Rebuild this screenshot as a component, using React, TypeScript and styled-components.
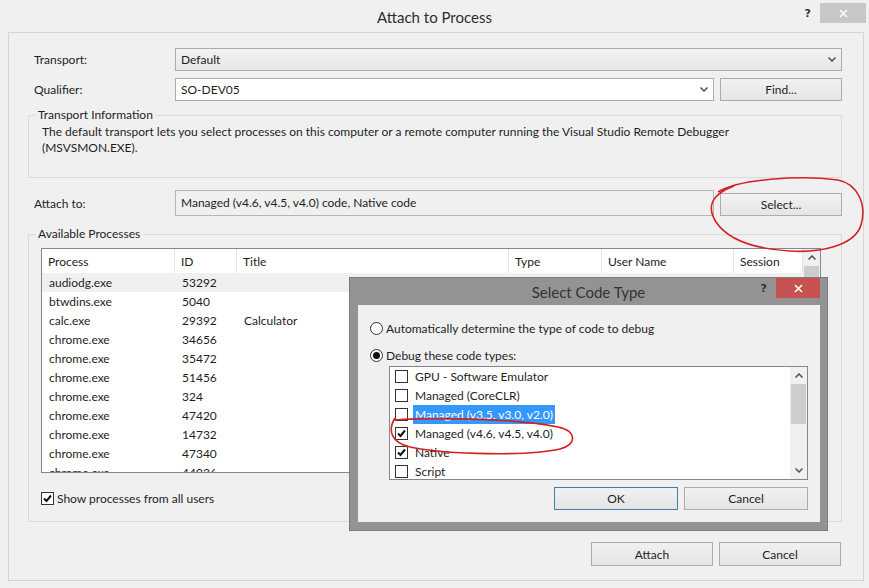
import styled, { createGlobalStyle } from "styled-components";

const GlobalStyle = createGlobalStyle`
  html, body {
    margin: 0;
    padding: 0;
  }
  body {
    width: 869px;
    height: 588px;
    overflow: hidden;
    background: #f0f0f0;
    font-family: Lato, "Liberation Sans", sans-serif;
    font-size: 12px;
    color: #1e1e1e;
  }
`;

type Proc = { name: string; id: string; title?: string };

const processes: Proc[] = [
  { name: "audiodg.exe", id: "53292" },
  { name: "btwdins.exe", id: "5040" },
  { name: "calc.exe", id: "29392", title: "Calculator" },
  { name: "chrome.exe", id: "34656" },
  { name: "chrome.exe", id: "35472" },
  { name: "chrome.exe", id: "51456" },
  { name: "chrome.exe", id: "324" },
  { name: "chrome.exe", id: "47420" },
  { name: "chrome.exe", id: "14732" },
  { name: "chrome.exe", id: "47340" },
  { name: "chrome.exe", id: "44936" },
];

const columns = ["Process", "ID", "Title", "Type", "User Name", "Session"];

const codeTypes = [
  { label: "GPU - Software Emulator", checked: false },
  { label: "Managed (CoreCLR)", checked: false },
  { label: "Managed (v3.5, v3.0, v2.0)", checked: false, selected: true },
  { label: "Managed (v4.6, v4.5, v4.0)", checked: true },
  { label: "Native", checked: true },
  { label: "Script", checked: false },
];

const Chevron = ({ up }: { up?: boolean }) => (
  <svg width="8" height="5" viewBox="0 0 8 5">
    <path
      d={up ? "M0.5 4.5 L4 1 L7.5 4.5" : "M0.5 0.5 L4 4 L7.5 0.5"}
      fill="none"
      stroke="#505050"
      strokeWidth="1.5"
    />
  </svg>
);

const CloseGlyph = () => (
  <svg width="9" height="9" viewBox="0 0 9 9">
    <path d="M1 1 L8 8 M8 1 L1 8" stroke="#fff" strokeWidth="1.6" />
  </svg>
);

const CheckBox = ({ checked }: { checked?: boolean }) => (
  <Box>
    {checked && (
      <svg width="11" height="11" viewBox="0 0 11 11">
        <path d="M2 5.5 L4.5 8 L9 2.5" fill="none" stroke="#111" strokeWidth="2" />
      </svg>
    )}
  </Box>
);

export default function App() {
  return (
    <>
      <GlobalStyle />
      <Window>
        <TitleBar>
          <span />
          <Title>Attach to Process</Title>
          <Controls>
            <HelpMark>?</HelpMark>
            <CloseButton $color="#c7c7c7">
              <CloseGlyph />
            </CloseButton>
          </Controls>
        </TitleBar>

        <Content>
          <FieldRow $top={0}>
            <FieldLabel>Transport:</FieldLabel>
            <Combo>
              Default
              <Chevron />
            </Combo>
          </FieldRow>
          <FieldRow $top={7}>
            <FieldLabel>Qualifier:</FieldLabel>
            <Combo $editable>
              SO-DEV05
              <Chevron />
            </Combo>
            <Button>Find...</Button>
          </FieldRow>

          <Group $top={14}>
            <GroupTitle>Transport Information</GroupTitle>
            <InfoText>
              The default transport lets you select processes on this computer or a remote
              computer running the Visual Studio Remote Debugger
              <br />
              (MSVSMON.EXE).
            </InfoText>
          </Group>

          <FieldRow $top={12} $align="flex-end">
            <FieldLabel $center>Attach to:</FieldLabel>
            <ReadOnlyBox>Managed (v4.6, v4.5, v4.0) code, Native code</ReadOnlyBox>
            <Button>Select...</Button>
          </FieldRow>

          <Group $top={18}>
            <GroupTitle>Available Processes</GroupTitle>
            <ProcessList>
              <ListMain>
                <HeaderRow>
                  {columns.map((c) => (
                    <HeaderCell key={c}>{c}</HeaderCell>
                  ))}
                </HeaderRow>
                {processes.map((p, i) => (
                  <ProcRow key={i} $hover={i === 0}>
                    <Cell>{p.name}</Cell>
                    <Cell>{p.id}</Cell>
                    <Cell>{p.title ?? ""}</Cell>
                    <Cell />
                    <Cell />
                    <Cell />
                  </ProcRow>
                ))}
              </ListMain>
              <ScrollBar>
                <ScrollArrow>
                  <Chevron up />
                </ScrollArrow>
                <Thumb $height={60} />
              </ScrollBar>
            </ProcessList>
            <CheckRow>
              <CheckBox checked />
              Show processes from all users
            </CheckRow>
          </Group>

          <ButtonRow>
            <Button>Attach</Button>
            <Button>Cancel</Button>
          </ButtonRow>
        </Content>

        <Modal>
          <ModalTitleBar>
            <span />
            <ModalTitle>Select Code Type</ModalTitle>
            <Controls $top={0} $right={7}>
              <HelpMark>?</HelpMark>
              <CloseButton $color="#c75050" $width={44}>
                <CloseGlyph />
              </CloseButton>
            </Controls>
          </ModalTitleBar>
          <ModalBody>
            <RadioRow>
              <Radio />
              Automatically determine the type of code to debug
            </RadioRow>
            <RadioRow $top={11}>
              <Radio $checked />
              Debug these code types:
            </RadioRow>
            <CodeList>
              <CodeItems>
                {codeTypes.map((c) => (
                  <CodeRow key={c.label}>
                    <CheckBox checked={c.checked} />
                    <ItemText $selected={c.selected}>{c.label}</ItemText>
                  </CodeRow>
                ))}
              </CodeItems>
              <ScrollBar>
                <ScrollArrow>
                  <Chevron up />
                </ScrollArrow>
                <Thumb $height={40} />
                <Spacer />
                <ScrollArrow>
                  <Chevron />
                </ScrollArrow>
              </ScrollBar>
            </CodeList>
            <ModalButtons>
              <Button $default $width={124}>
                OK
              </Button>
              <Button $width={124}>Cancel</Button>
            </ModalButtons>
          </ModalBody>
        </Modal>

        <Annotations width="869" height="588" viewBox="0 0 869 588">
          <path
            d="M718 192 C738 179, 800 175, 838 180 C858 184, 867 205, 861 225 C855 245, 822 253, 790 251 C756 249, 728 240, 716 222 C706 206, 712 194, 734 186"
            fill="none"
            stroke="#d42020"
            strokeWidth="1.6"
          />
          <path
            d="M393 420 C440 417, 520 419, 558 427 C577 431, 577 445, 560 449 C530 456, 450 455, 410 447 C392 443, 387 431, 395 418"
            fill="none"
            stroke="#d42020"
            strokeWidth="1.6"
          />
        </Annotations>
      </Window>
    </>
  );
}

const Window = styled.div`
  position: relative;
  width: 869px;
  height: 588px;
  display: flex;
  flex-direction: column;
  background: #f0f0f0;
`;

const TitleBar = styled.div`
  height: 32px;
  flex: none;
  display: grid;
  grid-template-columns: 1fr auto 1fr;
  align-items: start;
`;

const Title = styled.div`
  padding-top: 8px;
  line-height: 18px;
  font-size: 15px;
  color: #2d2d2d;
`;

const Controls = styled.div<{ $top?: number; $right?: number }>`
  justify-self: end;
  display: flex;
  align-items: center;
  margin-top: ${({ $top = 3 }) => $top}px;
  margin-right: ${({ $right = 3 }) => $right}px;
`;

const HelpMark = styled.span`
  font-family: "DejaVu Sans", sans-serif;
  font-weight: bold;
  font-size: 11px;
  color: #333;
  margin-right: 9px;
`;

const CloseButton = styled.div<{ $color: string; $width?: number }>`
  width: ${({ $width = 46 }) => $width}px;
  height: 20px;
  background: ${({ $color }) => $color};
  display: flex;
  align-items: center;
  justify-content: center;
`;

const Content = styled.div`
  flex: 1;
  margin: 0 5px 7px 8px;
  border: 1px solid #d5d5d5;
  padding: 15px 21px 0 19px;
  display: flex;
  flex-direction: column;
`;

const FieldRow = styled.div<{ $top: number; $align?: string }>`
  display: flex;
  align-items: ${({ $align = "center" }) => $align};
  gap: 6px;
  margin-top: ${({ $top }) => $top}px;
`;

const FieldLabel = styled.div<{ $center?: boolean }>`
  flex: none;
  width: 135px;
  padding-left: 6px;
  align-self: center;
`;

const Combo = styled.div<{ $editable?: boolean }>`
  flex: 1;
  height: 23px;
  box-sizing: border-box;
  border: 1px solid #acacac;
  background: ${({ $editable }) =>
    $editable ? "#fff" : "linear-gradient(#f3f3f3, #e6e6e6)"};
  display: flex;
  align-items: center;
  justify-content: space-between;
  padding: 0 5px 0 5px;
`;

const ReadOnlyBox = styled.div`
  flex: 1;
  height: 26px;
  box-sizing: border-box;
  border: 1px solid #b5b5b5;
  background: #f0f0f0;
  display: flex;
  align-items: center;
  padding: 0 5px 2px;
`;

const Button = styled.button<{ $default?: boolean; $width?: number }>`
  flex: none;
  width: ${({ $width = 122 }) => $width}px;
  height: 23px;
  padding: 0;
  border: 1px solid ${({ $default }) => ($default ? "#3c7fb1" : "#acacac")};
  background: linear-gradient(#f1f1f1, #e5e5e5);
  font: inherit;
  color: #1e1e1e;
`;

const Group = styled.div<{ $top: number }>`
  margin-top: ${({ $top }) => $top}px;
  border: 1px solid #d9d9d9;
`;

const GroupTitle = styled.div`
  margin: -9px 0 0 6px;
  padding: 0 3px;
  width: fit-content;
  line-height: 16px;
  background: #f0f0f0;
`;

const InfoText = styled.div`
  padding: 1px 13px 21px;
  line-height: 16px;
`;

const ProcessList = styled.div`
  margin: 6px 20px 0 12px;
  height: 225px;
  box-sizing: border-box;
  border: 1px solid #828790;
  background: #fff;
  display: flex;
  overflow: hidden;
`;

const ListMain = styled.div`
  flex: 1;
  min-width: 0;
`;

const gridColumns = "133px 62px 272px 93px 132px 1fr";

const HeaderRow = styled.div`
  display: grid;
  grid-template-columns: ${gridColumns};
  height: 24px;
`;

const HeaderCell = styled.div`
  display: flex;
  align-items: center;
  padding-left: 6px;
  border-right: 1px solid #e5e5e5;
`;

const ProcRow = styled.div<{ $hover?: boolean }>`
  display: grid;
  grid-template-columns: ${gridColumns};
  height: 19px;
  background: ${({ $hover }) => ($hover ? "#f0f0f0" : "#fff")};
`;

const Cell = styled.div`
  display: flex;
  align-items: center;
  padding-left: 7px;
  white-space: nowrap;
`;

const ScrollBar = styled.div`
  flex: none;
  width: 17px;
  background: #f0f0f0;
  display: flex;
  flex-direction: column;
  align-items: center;
`;

const ScrollArrow = styled.div`
  height: 17px;
  flex: none;
  display: flex;
  align-items: center;
  justify-content: center;
`;

const Thumb = styled.div<{ $height: number }>`
  width: 15px;
  height: ${({ $height }) => $height}px;
  flex: none;
  background: #cdcdcd;
`;

const Spacer = styled.div`
  flex: 1;
`;

const CheckRow = styled.div`
  display: flex;
  align-items: center;
  gap: 3px;
  margin: 19px 0 16px 12px;
  height: 13px;
`;

const Box = styled.span`
  flex: none;
  width: 13px;
  height: 13px;
  box-sizing: border-box;
  border: 1px solid #333;
  background: #fff;
  display: flex;
  align-items: center;
  justify-content: center;
`;

const ButtonRow = styled.div`
  display: flex;
  justify-content: flex-end;
  gap: 6px;
  margin: 20px 1px 0 0;
  & > button {
    height: 24px;
  }
`;

const Modal = styled.div`
  position: absolute;
  left: 350px;
  top: 278px;
  width: 477px;
  height: 252px;
  background: #939393;
  box-shadow: 0 0 0 1px #7c7c7c;
  display: flex;
  flex-direction: column;
`;

const ModalTitleBar = styled.div`
  height: 27px;
  flex: none;
  display: grid;
  grid-template-columns: 1fr auto 1fr;
  align-items: start;
`;

const ModalTitle = styled.div`
  padding-top: 5px;
  line-height: 18px;
  font-size: 15px;
  color: #333;
`;

const ModalBody = styled.div`
  flex: 1;
  margin: 0 7px 8px 8px;
  background: #f0f0f0;
  padding: 15px 12px 0;
`;

const RadioRow = styled.div<{ $top?: number }>`
  display: flex;
  align-items: center;
  gap: 3px;
  height: 16px;
  margin-top: ${({ $top = 0 }) => $top}px;
`;

const Radio = styled.span<{ $checked?: boolean }>`
  flex: none;
  width: 13px;
  height: 13px;
  box-sizing: border-box;
  border: 1px solid #333;
  border-radius: 50%;
  background: #fff;
  display: flex;
  align-items: center;
  justify-content: center;
  &::after {
    content: "";
    display: ${({ $checked }) => ($checked ? "block" : "none")};
    width: 7px;
    height: 7px;
    border-radius: 50%;
    background: #111;
  }
`;

const CodeList = styled.div`
  margin: 3px 0 0 19px;
  width: 419px;
  height: 114px;
  box-sizing: border-box;
  border: 1px solid #828790;
  background: #fff;
  display: flex;
`;

const CodeItems = styled.div`
  flex: 1;
`;

const CodeRow = styled.div`
  height: 19px;
  display: flex;
  align-items: center;
  gap: 5px;
  padding-left: 5px;
`;

const ItemText = styled.span<{ $selected?: boolean }>`
  padding: 0 2px;
  line-height: 19px;
  background: ${({ $selected }) => ($selected ? "#3399ff" : "transparent")};
  color: ${({ $selected }) => ($selected ? "#fff" : "inherit")};
`;

const ModalButtons = styled.div`
  display: flex;
  justify-content: flex-end;
  gap: 6px;
  margin-top: 7px;
`;

const Annotations = styled.svg`
  position: absolute;
  left: 0;
  top: 0;
  pointer-events: none;
`;
